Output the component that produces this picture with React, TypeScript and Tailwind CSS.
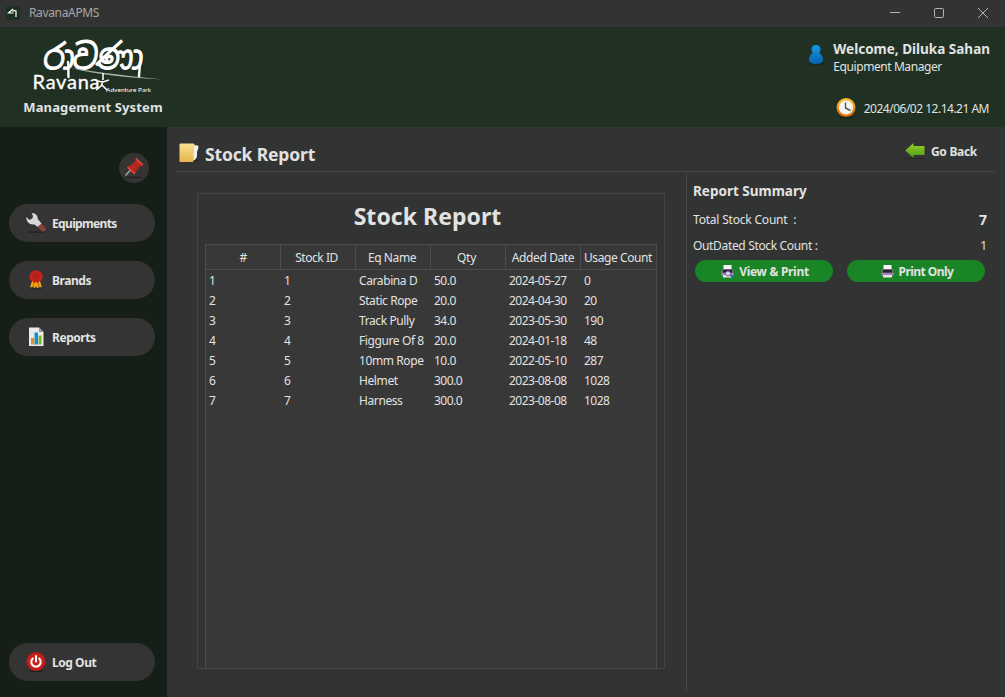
import React from "react";

const columns = ["#", "Stock ID", "Eq Name", "Qty", "Added Date", "Usage Count"];
const headTracking = ["pl-[1px]", "tracking-[-0.45px] pr-[3px]", "tracking-[-0.4px] pr-[2px]", "tracking-[-0.3px] pr-[3px]", "tracking-[-0.4px]", "tracking-[-0.4px] pr-[1px]"];

const rows = [
  ["1", "1", "Carabina D", "50.0", "2024-05-27", "0"],
  ["2", "2", "Static Rope", "20.0", "2024-04-30", "20"],
  ["3", "3", "Track Pully", "34.0", "2023-05-30", "190"],
  ["4", "4", "Figgure Of 8", "20.0", "2024-01-18", "48"],
  ["5", "5", "10mm Rope", "10.0", "2022-05-10", "287"],
  ["6", "6", "Helmet", "300.0", "2023-08-08", "1028"],
  ["7", "7", "Harness", "300.0", "2023-08-08", "1028"],
];

function AppIcon() {
  return (
    <svg width="14" height="14" viewBox="0 0 14 14" fill="none">
      <rect width="14" height="14" rx="3" fill="#1b3020" />
      <path d="M7 3L2.500 7H7.500M6.500 5.500L8 4.500L10 5V11" stroke="#fff" strokeWidth="1.200" />
    </svg>
  );
}

function Logo() {
  return (
    <svg width="150" height="60" viewBox="0 0 150 60" className="block overflow-visible">
      <g transform="translate(0 -1.500) skewX(-6) scale(1 1.120)">
        <text x="26" y="29.500" fontSize="31" fill="#fff" stroke="#fff" strokeWidth="0.900" strokeLinejoin="round" fontFamily="Noto Sans Sinhala, Noto Sans, sans-serif" textLength="100">රාවණා</text>
      </g>
      <path d="M50 25C51 30 50 34 50.500 40M122 25C122 31 121 35 121 40" stroke="#fff" strokeWidth="2.400" strokeLinecap="round" fill="none" />
      <path d="M53 31C85 36 112 39 145 42.500C112 41 80 38 53 31Z" fill="#a5afa7" />
      <text x="14.500" y="51.500" fontSize="20" fill="#fff" stroke="#fff" strokeWidth="0.300" fontFamily="Lato" textLength="67">Ravana</text>
      <path d="M85 36V43M79 44L85 45L91 43M85 44L83 49L78 53M84 48L89 53" stroke="#fff" strokeWidth="1.500" fill="none" />
      <text x="88" y="54.500" fontSize="6.500" fill="#fff" fontFamily="Lato" textLength="45">Adventure Park</text>
    </svg>
  );
}

function UserIcon() {
  return (
    <svg width="20" height="22" viewBox="0 0 20 22">
      <defs>
        <linearGradient id="user" x1="0" y1="0" x2="0" y2="1">
          <stop stopColor="#129be2" />
          <stop offset="1" stopColor="#0661ad" />
        </linearGradient>
      </defs>
      <ellipse cx="11" cy="19.500" rx="8" ry="1.300" fill="#16241a" />
      <path d="M10 1C7 1 5.300 3 5.500 5.500C5.600 7 6.200 8 7 9C4.500 10 3 12.500 3 16C3 18.500 6 20 10 20S17 18.500 17 16C17 12.500 15.500 10 13 9C13.800 8 14.400 7 14.500 5.500C14.700 3 13 1 10 1Z" fill="url(#user)" />
    </svg>
  );
}

function ClockIcon() {
  return (
    <svg width="20" height="21" viewBox="0 0 20 21">
      <defs>
        <linearGradient id="clock" x1="0" y1="0" x2="0" y2="1">
          <stop stopColor="#f5bd20" />
          <stop offset="1" stopColor="#e36c0a" />
        </linearGradient>
      </defs>
      <ellipse cx="10" cy="19.500" rx="7" ry="1.200" fill="#14221a" />
      <circle cx="10" cy="9.500" r="8.300" fill="#f7f7f5" stroke="url(#clock)" strokeWidth="2.300" />
      <circle cx="10" cy="9.500" r="6" fill="none" stroke="#d4d4d4" strokeDasharray="1 2.140" />
      <path d="M9.500 4.500V10L14.500 12.500" fill="none" stroke="#555" strokeWidth="1.400" />
    </svg>
  );
}

function PinIcon() {
  return (
    <svg width="22" height="22" viewBox="0 0 22 22">
      <ellipse cx="11" cy="20.500" rx="9" ry="0.800" fill="#202020" />
      <path d="M2.500 18.500L8 12.500" stroke="#a5a5a5" strokeWidth="1.500" />
      <path d="M4 10L6.500 9L12.500 4L13 1L20.500 8L17.500 9L13 14.500L12 17.500Z" fill="#c52520" />
      <path d="M4.500 10.300L12 17M13 1.500L20 8.300" stroke="#e64a40" strokeWidth="1.400" />
      <path d="M8 9L13 14M11 6L16 11M9 12L15 6M11 14L17 8M7 10.500L13 4.500" stroke="#8a2a27" strokeWidth="0.700" />
    </svg>
  );
}

function WrenchIcon() {
  return (
    <svg width="20" height="20" viewBox="0 0 20 20">
      <ellipse cx="10" cy="19" rx="9" ry="0.700" fill="#202020" />
      <path d="M11 11L15.500 10.500L19.500 15C20 17 18.500 19 16.500 18.500L12 14Z" fill="#93483a" />
      <path d="M13.500 12.500L17.500 17M15 11.500L18.500 15.500" stroke="#643028" strokeWidth="0.800" />
      <path d="M5.500 0.500C9 -0.500 12 2.500 11.800 6L15.500 10.500L11.500 13.800L8 11.300C4 12.300 0.300 9 0.200 4L3.500 7L6.500 5.300L7 2.800Z" fill="#d7d7d8" />
    </svg>
  );
}

function BadgeIcon() {
  return (
    <svg width="20" height="20" viewBox="0 0 20 20">
      <ellipse cx="10" cy="18.800" rx="6" ry="0.800" fill="#222" />
      <path d="M6 11L4 17.500L7 16.800L9 18.500L10 16L11.500 18.500L13.500 16.800L16 17.500L14 11Z" fill="#efa511" />
      <path d="M8 12L7.500 17M12 12L13 17" stroke="#b86b08" />
      <path d="M10 0L12 1L14.500 1.500L15.300 3.700L17 5.500L16.200 7.500L16 10L13.800 11L12 13L10 12.300L8 13L6.200 11L4 10L3.800 7.500L3 5.500L4.700 3.700L5.500 1.500L8 1Z" fill="#c4241c" />
      <circle cx="10" cy="6.500" r="4.300" fill="#b8211b" />
    </svg>
  );
}

function ReportIcon() {
  return (
    <svg width="20" height="20" viewBox="0 0 20 20">
      <path d="M3 0.500H13L17.500 5V19H3Z" fill="#ececec" />
      <path d="M13 0.500L17.500 5H13Z" fill="#929292" />
      <path d="M5 11H8V17.500H5Z" fill="#f18a16" />
      <path d="M8.500 5.500H12V17.500H8.500Z" fill="#168fcc" />
      <path d="M12.500 8.500H15.500V17.500H12.500Z" fill="#76b82a" />
    </svg>
  );
}

function PowerIcon() {
  return (
    <svg width="20" height="20" viewBox="0 0 20 20">
      <ellipse cx="10" cy="19.200" rx="8" ry="0.800" fill="#202020" />
      <circle cx="10" cy="9.500" r="9.500" fill="#c5221d" />
      <circle cx="10" cy="9.500" r="9" fill="none" stroke="#a31916" />
      <path d="M6.800 6.500A4.700 4.700 0 1 0 13.200 6.500M10 4V9.500" fill="none" stroke="#fff" strokeWidth="2" strokeLinecap="round" />
    </svg>
  );
}

function FolderIcon() {
  return (
    <svg width="20" height="20" viewBox="0 0 20 20">
      <defs>
        <linearGradient id="folder" x1="0" y1="0" x2="0" y2="1">
          <stop stopColor="#fbe190" />
          <stop offset="1" stopColor="#e7b44b" />
        </linearGradient>
      </defs>
      <path d="M13 18.500H20V17.500L16 16Z" fill="#242424" />
      <path d="M12 2L19 2.500C20.500 5 17.500 8 18 11C18.500 14 17 16 15 17.500L12 16Z" fill="#f1f1f1" />
      <path d="M0.500 1.500Q0.500 0.500 1.500 0.500H14Q16 0.500 15.500 2.500C15 5 14.500 15 14.500 18Q14.500 19 13.500 19H1.500Q0.500 19 0.500 18Z" fill="url(#folder)" />
    </svg>
  );
}

function ArrowIcon() {
  return (
    <svg width="20" height="17" viewBox="0 0 20 17">
      <defs>
        <linearGradient id="arrow" x1="0" y1="0" x2="0" y2="1">
          <stop stopColor="#9bd126" />
          <stop offset="1" stopColor="#4a9c17" />
        </linearGradient>
      </defs>
      <path d="M0 15.500H20" stroke="#262827" />
      <path d="M0.300 7.500L8.500 0V3H19.500V12H8.500V15Z" fill="url(#arrow)" />
    </svg>
  );
}

function PrinterIcon({ preview }: { preview?: boolean }) {
  return (
    <svg width="13" height="13" viewBox="0 0 13 13">
      <path d="M2.500 0H10.500V5H2.500Z" fill="#f5f5f5" />
      <path d="M1.500 4H11.500L12.700 6V10H0.300V6Z" fill="#75667e" />
      <path d="M2 5H11V7.500H2Z" fill="#26232b" />
      <path d="M0.300 8H12.700V10.500H0.300Z" fill="#a580b7" />
      <path d="M2 10H11V12.500H2Z" fill="#e6e6e9" />
      {preview && <circle cx="7" cy="8.500" r="2.500" fill="#d4dceb" stroke="#7650a0" />}
      {preview && <path d="M9.500 10L12 12.500" stroke="#1261c4" strokeWidth="1.700" />}
    </svg>
  );
}

function NavButton({ icon, label, tight }: { icon: React.ReactNode; label: string; tight?: boolean }) {
  return (
    <button className="flex h-[38px] w-[146px] shrink-0 items-center gap-[6px] rounded-full bg-[#333433] pl-[17px] text-[12px] font-bold">
      {icon}
      <span className={tight ? "pt-[2px] tracking-[-0.65px]" : "pt-[2px] tracking-[-0.45px]"}>{label}</span>
    </button>
  );
}

export default function App() {
  return (
    <div className="flex h-[697px] w-[1005px] flex-col overflow-hidden bg-[#323433] font-['Noto_Sans',sans-serif] text-[12px] leading-4 whitespace-nowrap text-[#e1e2e1]">
      <div className="flex h-[27px] shrink-0 items-center bg-[#333333] pr-[16px] pb-[2px] pl-[6px]">
        <AppIcon />
        <span className="ml-[9px] tracking-[-0.35px] text-[#a7a7a7]">RavanaAPMS</span>
        <svg className="ml-auto" width="100" height="12" viewBox="0 0 100 12" fill="none" stroke="#b4b4b4">
          <path d="M1 5.500H11M89 1L99 11M99 1L89 11" />
          <rect x="45.500" y="1.500" width="9" height="9" rx="1" />
        </svg>
      </div>
      <header className="flex h-[100px] shrink-0 justify-between bg-[#203123]">
        <div className="flex w-[186px] flex-col items-center pt-[10px]">
          <Logo />
          <div className="mt-[2px] text-[13px] font-bold tracking-[0.12px]">Management System</div>
        </div>
        <div className="flex flex-col items-end pt-[13px] pr-[15px]">
          <div className="flex">
            <div className="mt-[4px] mr-[7px]"><UserIcon /></div>
            <div>
              <div className="h-[18px] text-[13.5px] leading-[18px] font-bold">Welcome, Diluka Sahan</div>
              <div className="h-[18px] leading-[18px] tracking-[-0.42px]">Equipment Manager</div>
            </div>
          </div>
          <div className="mt-[22px] mr-[1px] flex items-center gap-[8px]">
            <ClockIcon />
            <span className="mt-[1px] tracking-[-0.5px]">2024/06/02 12.14.21 AM</span>
          </div>
        </div>
      </header>
      <div className="flex min-h-0 flex-1">
        <nav className="flex w-[167px] shrink-0 flex-col bg-[#161f17] px-[9px] pt-[26px] pb-[16px]">
          <button className="mr-[9px] mb-[21px] flex size-[30px] shrink-0 items-center justify-center self-end rounded-full bg-[#333433]"><PinIcon /></button>
          <div className="flex flex-col gap-[19px]">
            <NavButton icon={<WrenchIcon />} label="Equipments" tight />
            <NavButton icon={<BadgeIcon />} label="Brands" />
            <NavButton icon={<ReportIcon />} label="Reports" />
          </div>
          <div className="mt-auto"><NavButton icon={<PowerIcon />} label="Log Out" /></div>
        </nav>
        <main className="flex flex-1 flex-col pr-[10px] pl-[10px]">
          <div className="flex h-[45px] shrink-0 border-b border-[#474948]">
            <div className="mt-[16px] ml-[2px]"><FolderIcon /></div>
            <h1 className="mt-[15px] ml-[6px] text-[17.5px] leading-6 font-bold tracking-[-0.15px]">Stock Report</h1>
            <button className="mt-[15px] mr-[18px] ml-auto flex h-[18px] items-center gap-[6px] font-bold tracking-[-0.3px]"><ArrowIcon /><span className="pt-[2px]">Go Back</span></button>
          </div>
          <div className="flex flex-1">
            <section className="mt-[21px] ml-[20px] flex h-[476px] w-[468px] shrink-0 flex-col border border-[#444644] pr-[7px] pl-[7px]">
              <h2 className="flex h-[50px] shrink-0 items-center justify-center pr-[7px] pb-[6px] text-[23px] font-bold tracking-[0.05px]">Stock Report</h2>
              <div className="flex-1 border-x border-t border-[#4b4c4b] bg-[#383838]">
                <div className="grid h-[25px] grid-cols-[75px_75px_75px_75px_75px_75px] border-b border-[#4d4d4d]">
                  {columns.map((c, i) => (
                    <div key={c} className={`flex items-center justify-center pt-[1px] ${i < 5 ? "border-r border-[#4d4d4d]" : ""} ${headTracking[i]}`}>{c}</div>
                  ))}
                </div>
                {rows.map((r) => (
                  <div key={r[0]} className="grid h-[20px] grid-cols-[75px_75px_75px_75px_75px_75px] items-center pt-[2px]">
                    {r.map((v, i) => (
                      <div key={i} className={i > 2 ? "pl-[3px] tracking-[-0.5px]" : "pl-[3px] tracking-[-0.4px]"}>{v}</div>
                    ))}
                  </div>
                ))}
              </div>
            </section>
            <aside className="mt-[2px] ml-[21px] h-[516px] flex-1 border-l border-[#474948] pl-[6px]">
              <h3 className="mt-[9px] text-[13.5px] font-bold">Report Summary</h3>
              <div className="mt-[13px] flex justify-between pr-[8px]">
                <span className="tracking-[-0.2px]">Total Stock Count&nbsp; :</span>
                <b className="text-[14px]">7</b>
              </div>
              <div className="mt-[10px] flex justify-between pr-[8px]">
                <span className="tracking-[-0.34px]">OutDated Stock Count :</span>
                <span>1</span>
              </div>
              <div className="mt-[6px] ml-[2px] flex gap-[14px]">
                <button className="flex h-[22px] w-[138px] items-center justify-center gap-[5px] rounded-full bg-[#1a8527] pl-[2px] font-bold tracking-[-0.3px]"><PrinterIcon preview /><span className="pt-[2px]">View &amp; Print</span></button>
                <button className="flex h-[22px] w-[138px] items-center justify-center gap-[5px] rounded-full bg-[#1a8527] pl-[2px] font-bold tracking-[-0.55px]"><PrinterIcon /><span className="pt-[2px]">Print Only</span></button>
              </div>
            </aside>
          </div>
        </main>
      </div>
    </div>
  );
}
